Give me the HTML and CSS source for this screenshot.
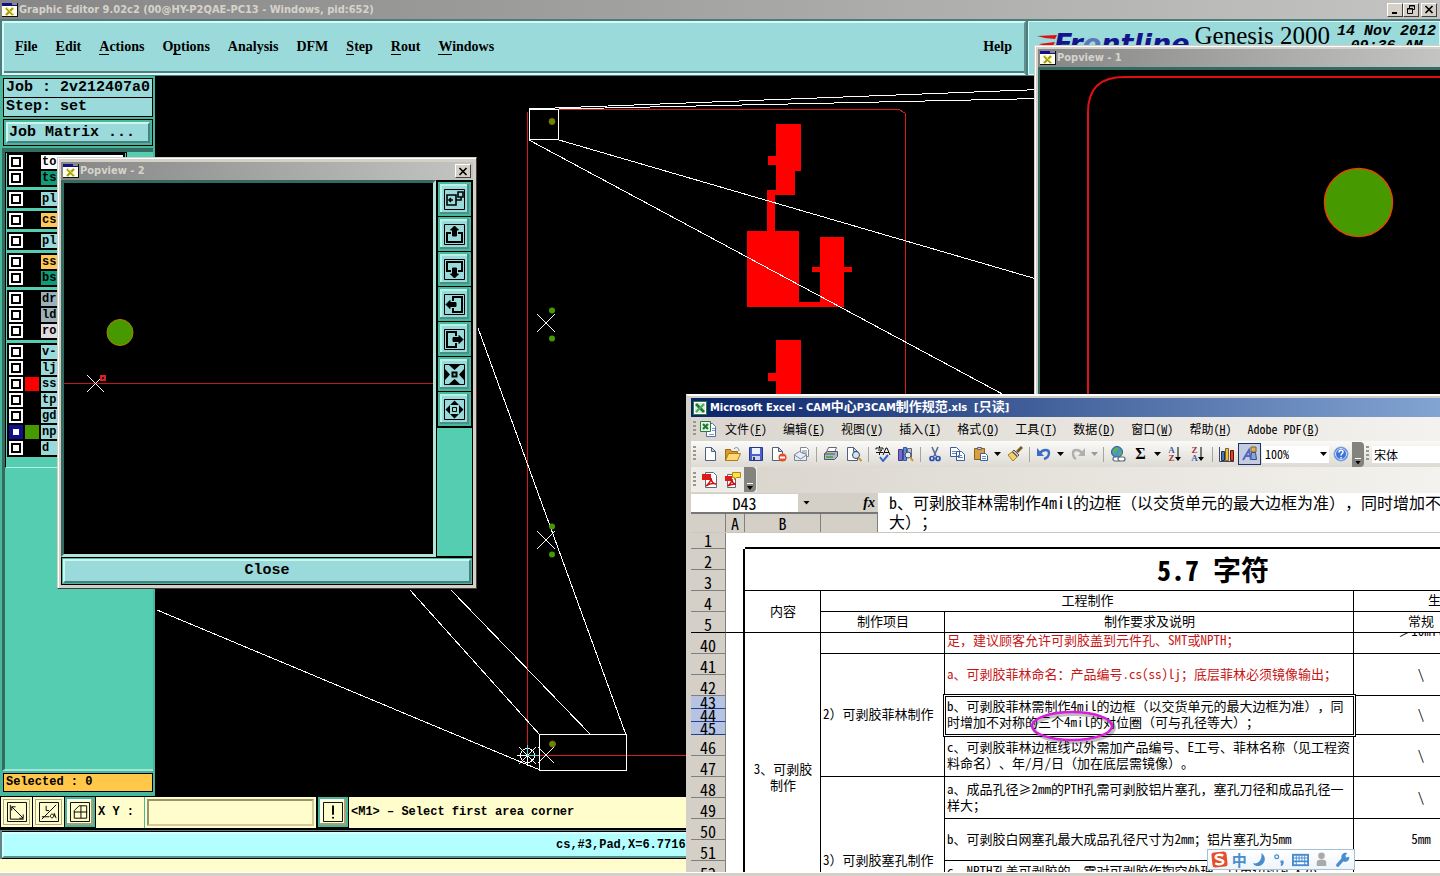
FILE: index.html
```html
<!DOCTYPE html>
<html lang="zh-CN">
<head>
<meta charset="utf-8">
<title>Graphic Editor</title>
<link rel="stylesheet" href="styles.css">
</head>
<body>
<svg class="defs" aria-hidden="true">
  <symbol id="xapp" viewBox="0 0 16 14"><path fill="#111" d="M0 0h16v14H0z"/><path fill="#fffff0" d="M0 0h15v13H0z"/><path fill="#10108a" d="M0 0h15v3H0z"/><path fill="#888" d="M10 0h5v2h-5z"/><path stroke="#a8a010" stroke-width="2.4" d="M4 5l7 7M11 5l-7 7"/><path stroke="#e8e040" d="M5 5l6 6"/></symbol>
  <symbol id="xls" viewBox="0 0 16 16"><path fill="#fff" stroke="#2c7a3c" d="M1.500 1.500h13v13h-13z"/><path fill="#d6ecd6" d="M3 3h10v10H3z"/><path stroke="#1d7a35" stroke-width="2.600" d="M4 4l8 8"/><path stroke="#4aa860" stroke-width="2.200" d="M12 4l-8 8"/></symbol>
  <symbol id="xlsdoc" viewBox="0 0 16 16"><path fill="#fff" stroke="#5070a8" d="M6.500 2.500h6l3 3v10h-9z"/><path stroke="#7a98cc" d="M12 7.500h3M12 9.500h3M9 13.500h5"/><path fill="#e6f4e6" stroke="#2c7a3c" d="M.5.500h10v10H.5z"/><path stroke="#1d7a35" stroke-width="2.200" d="M3 3l5 5M8 3L3 8"/></symbol>
  <symbol id="closex" viewBox="0 0 10 9"><path fill="none" stroke="#000" stroke-width="1.700" d="M1.500 1l7 7M8.500 1l-7 7"/></symbol>
  <symbol id="page" viewBox="0 0 16 16"><path fill="#fff" stroke="#50617e" d="M3.500 1.500h6l4 4v9h-10z"/><path fill="#c5d6f2" stroke="#50617e" d="M9.500 1.500v4h4z"/></symbol>
</svg>

<div class="app">
  <header class="titlebar">
    <svg class="appicon"><use href="#xapp"/></svg>
    <h1 class="caption">Graphic Editor 9.02c2 (00@HY-P2QAE-PC13 - Windows, pid:652)</h1>
    <div class="winbtns">
      <button class="winbtn" aria-label="Minimize"><svg viewBox="0 0 10 9"><path fill="#000" d="M2 7h5v2H2z"/></svg></button>
      <button class="winbtn" aria-label="Restore"><svg viewBox="0 0 10 9"><path fill="none" stroke="#000" d="M3.500 3V.5h5v4H7M1.500 3.500h5v5h-5zM1 4h6M3 1h6"/></svg></button>
      <button class="winbtn last" aria-label="Close"><svg><use href="#closex"/></svg></button>
    </div>
  </header>

  <div class="top">
    <nav class="menubar">
      <button class="menu"><u>F</u>ile</button><button class="menu"><u>E</u>dit</button><button class="menu"><u>A</u>ctions</button><button class="menu">O<u>p</u>tions</button><button class="menu">Analysis</button><button class="menu">DFM</button><button class="menu"><u>S</u>tep</button><button class="menu"><u>R</u>out</button><button class="menu"><u>W</u>indows</button><button class="menu help">Help</button>
    </nav>
    <div class="brand">
      <svg class="streaks" viewBox="0 0 20 24"><path fill="#e01010" d="M0 2l20-1-2 4-10-1zM2 10l16-2-2 4H8zM0 18l16-2-2 4z"/></svg>
      <span class="logo">Fr<span class="swoosh">o</span>ntline</span>
      <span class="product">Genesis 2000</span>
      <span class="date">14 Nov 2012<br>09:36 AM</span>
    </div>
  </div>

  <div class="work">
    <aside class="side">
      <div class="field">Job : 2v212407a0</div>
      <div class="field second">Step: set</div>
      <div class="matrixbox"><button class="matrix">Job Matrix ...</button></div>
      <div class="panel">
        <div class="layers">
          <div class="group">
            <div class="layer"><i class="tick"></i><i class="swatch"></i><span class="lname white">to</span></div>
            <div class="layer"><i class="tick"></i><i class="swatch"></i><span class="lname green">ts</span></div>
          </div>
          <div class="group"><div class="layer"><i class="tick"></i><i class="swatch"></i><span class="lname">pl</span></div></div>
          <div class="group"><div class="layer"><i class="tick"></i><i class="swatch"></i><span class="lname amber">cs</span></div></div>
          <div class="group"><div class="layer"><i class="tick"></i><i class="swatch"></i><span class="lname">pl</span></div></div>
          <div class="group">
            <div class="layer"><i class="tick"></i><i class="swatch"></i><span class="lname amber">ss</span></div>
            <div class="layer"><i class="tick"></i><i class="swatch"></i><span class="lname green">bs</span></div>
          </div>
          <div class="group">
            <div class="layer"><i class="tick"></i><i class="swatch"></i><span class="lname gray">dr</span></div>
            <div class="layer"><i class="tick"></i><i class="swatch"></i><span class="lname gray">ld</span></div>
            <div class="layer"><i class="tick"></i><i class="swatch"></i><span class="lname pale">ro</span></div>
          </div>
          <div class="group">
            <div class="layer"><i class="tick"></i><i class="swatch"></i><span class="lname">v-</span></div>
            <div class="layer"><i class="tick"></i><i class="swatch"></i><span class="lname">lj</span></div>
            <div class="layer"><i class="tick"></i><i class="swatch red"></i><span class="lname">ss</span></div>
            <div class="layer"><i class="tick"></i><i class="swatch"></i><span class="lname">tp</span></div>
            <div class="layer"><i class="tick"></i><i class="swatch"></i><span class="lname">gd</span></div>
            <div class="layer"><i class="tick navy"></i><i class="swatch lime"></i><span class="lname">np</span></div>
            <div class="layer"><i class="tick"></i><i class="swatch"></i><span class="lname">d</span></div>
          </div>
        </div>
      </div>
      <div class="selected">Selected : 0</div>
    </aside>
    <main class="canvas">
      <svg class="drawing" width="1285" height="720" viewBox="155 76 1285 720" fill="none" shape-rendering="crispEdges">
        <path stroke="#d81c1c" d="M527.500 755V112M559 109.500h340l6.500 4v290M527 755.500h200"/>
        <path fill="#f00" d="M776 124h25v47h-6v24h-20v36h24v71h21v-30h-8v-5h8v-30h24v30h8v5h-8v35h-97v-76h20v-41h9v-25h-8v-9h8zM776 340h25v60h-25v-19h-8v-8h8z"/>
        <g stroke="#fff">
          <path d="M529.500 109.500h29v30h-29zM539.500 734.500h87v36h-87zM529 109l511-19.500M559 109l481-10.500M529 140l477 256M559 140l481 140M478 328l148 407M410 590l130 145M451 590l140 145M157 610l383 160"/>
          <path d="M537 314l18 18M555 314l-18 18M537 531l18 18M555 531l-18 18M538 747l16 16M554 747l-16 16"/>
          <path d="M517 755.500h21M527.500 746v20M519 747l17 17M536 747l-17 17"/><circle cx="527.500" cy="755.500" r="7"/>
        </g>
        <path stroke="#50d8d8" d="M527.500 745v10h11"/>
        <g fill="#479900" shape-rendering="auto"><g stroke="#a05a00"><circle cx="552" cy="121.500" r="3"/><circle cx="552.500" cy="744" r="3"/></g><circle cx="552" cy="310.500" r="3"/><circle cx="552" cy="338.500" r="3"/><circle cx="552" cy="526.500" r="3"/><circle cx="552" cy="554.500" r="3"/></g>
      </svg>
    </main>
  </div>

  <div class="msgbar">
    <button class="tool flat" aria-label="Snap off"><svg viewBox="0 0 21 21"><path d="M.5.5h20v20H.5zM3.500 3v15h14M5 5l12 12M5 9V5h4M13 17h4v-4"/></svg></button>
    <button class="tool flat" aria-label="Angle"><svg viewBox="0 0 21 21"><path d="M.5.5h20v20H.5zM3 18L18 3M7.500 4v5h3M3 15.500h8M12 15c0-3 3-3 4 0M12 15c1 3 4 2 4-3M16 12l2 5"/></svg></button>
    <button class="tool" aria-label="Grid"><svg viewBox="0 0 21 21"><path d="M.5.500h20v20H.5zM4.500 9l5-5h8v13h-13zM11.500 4v13M4 10.500h14"/></svg></button>
    <label class="xy" for="xy">X Y :</label>
    <span class="xybox"><input id="xy" class="xyinput" type="text"></span>
    <button class="tool" aria-label="Alert"><svg viewBox="0 0 21 21"><path d="M.5.5h20v20H.5z"/><path fill="#000" d="M10 4h1v9h-1zM10 16h1v1h-1z"/></svg></button>
    <div class="message">&lt;M1&gt; – Select first area corner</div>
  </div>
  <div class="status"><div class="statustext">cs,#3,Pad,X=6.7716</div></div>
  <div class="cream"></div>
  <div class="edge"></div>
</div>

<section class="popview one">
  <header class="poptitle"><svg class="appicon"><use href="#xapp"/></svg><h2 class="caption">Popview - 1</h2></header>
  <div class="popbody">
    <svg width="400" height="330" viewBox="1040 70 400 330" fill="none"><path stroke="#e01010" stroke-width="2" d="M1088 400V112Q1088 77 1124 77h320"/><circle cx="1358.500" cy="202.500" r="34" fill="#479900" stroke="#e04a00" stroke-width="1.500"/></svg>
  </div>
</section>

<section class="popview two">
  <header class="poptitle"><svg class="appicon"><use href="#xapp"/></svg><h2 class="caption">Popview - 2</h2><button class="winbtn last" aria-label="Close window"><svg><use href="#closex"/></svg></button></header>
  <div class="poprow">
    <div class="popbody">
      <svg width="371" height="371" viewBox="64 183 371 371" fill="none"><path stroke="#c01818" d="M64 383.500h371"/><circle cx="120" cy="332.500" r="13" fill="#479900" stroke="#b08000"/><path stroke="#fff" d="M87 375l17 17M104 375l-17 17"/><path stroke="#e02020" stroke-width="2" d="M101 376h4v4h-4z"/></svg>
    </div>
    <div class="poptools">
      <button class="ptool" aria-label="Home"><svg viewBox="0 0 21 21"><path d="M.5.5h20v20H.5z"/><path stroke-width="1.600" d="M3 6h9v10H3zM14 3h5v5h-5zM12 11h5V8M9 11H5M7 9l-2 2 2 2"/></svg></button>
      <button class="ptool" aria-label="Pan up"><svg viewBox="0 0 21 21"><path d="M.5.5h20v20H.5z"/><path stroke-width="2" d="M7 9H3v9h15V9h-4"/><path fill="#000" d="M10.500 2l4 4h-2v6h-4V6h-2z"/></svg></button>
      <button class="ptool" aria-label="Pan down"><svg viewBox="0 0 21 21"><path d="M.5.5h20v20H.5z"/><path stroke-width="2" d="M7 12H3V3h15v9h-4"/><path fill="#000" d="M10.500 19l4-4h-2V9h-4v6h-2z"/></svg></button>
      <button class="ptool" aria-label="Pan left"><svg viewBox="0 0 21 21"><path d="M.5.5h20v20H.5z"/><path stroke-width="2" d="M9 7V3h9v15H9v-4"/><path fill="#000" d="M2 10.500l4-4v2h6v4H6v2z"/></svg></button>
      <button class="ptool" aria-label="Pan right"><svg viewBox="0 0 21 21"><path d="M.5.5h20v20H.5z"/><path stroke-width="2" d="M12 7V3H3v15h9v-4"/><path fill="#000" d="M19 10.500l-4-4v2H9v4h6v2z"/></svg></button>
      <button class="ptool" aria-label="Zoom in"><svg viewBox="0 0 21 21"><path d="M.5.5h20v20H.5z"/><path stroke-width="2" d="M8.500 8.500h4v4h-4z"/><path fill="#000" stroke="none" d="M5 1h11l-5.500 5zM5 20h11l-5.500-5zM1 5v11l5-5.500zM20 5v11l-5-5.500z"/></svg></button>
      <button class="ptool" aria-label="Zoom out"><svg viewBox="0 0 21 21"><path d="M.5.5h20v20H.5zM8.500 8.500h4v4h-4z"/><path fill="#000" stroke="none" d="M6 6h9l-4.500-4.500zM6 15h9l-4.500 4.500zM6 6v9l-4.500-4.500zM15 6v9l4.500-4.500z"/><path fill="#9adadb" stroke="none" d="M7 7h7v7H7z"/><path d="M8.500 8.500h4v4h-4z"/></svg></button>
    </div>
  </div>
  <div class="closebox"><button class="closebtn">Close</button></div>
</section>

<section class="excel">
  <header class="xtitle"><svg class="xicon"><use href="#xls"/></svg><h2 class="xcaption">Microsoft Excel - CAM<span>中心</span>P3CAM<span>制作规范</span>.xls&nbsp; [<span>只读</span>]</h2></header>
  <nav class="xmenu">
    <i class="grip"></i><svg class="xicon"><use href="#xlsdoc"/></svg>
    <button>文件(<u>F</u>)</button><button>编辑(<u>E</u>)</button><button>视图(<u>V</u>)</button><button>插入(<u>I</u>)</button><button>格式(<u>O</u>)</button><button>工具(<u>T</u>)</button><button>数据(<u>D</u>)</button><button>窗口(<u>W</u>)</button><button>帮助(<u>H</u>)</button><button>Adobe PDF(<u>B</u>)</button>
  </nav>
  <div class="xbar">
    <i class="grip"></i>
    <button class="ic" aria-label="New"><svg><use href="#page"/></svg></button>
    <button class="ic" aria-label="Open"><svg viewBox="0 0 16 16"><path fill="#d99a2b" stroke="#a06a10" d="M.5 14.500v-11h5l1 2h6v9z"/><path fill="#ffd978" stroke="#b07a18" d="M.5 14.500l3-7h12l-3 7z"/><path fill="none" stroke="#6a8ac0" d="M9 3c2-3 5-1 5 2"/></svg></button>
    <button class="ic" aria-label="Save"><svg viewBox="0 0 16 16"><path fill="#4a5fc8" stroke="#26348c" d="M1.500 1.500h13v13h-13z"/><path fill="#eef2ff" d="M4 2h8v6H4z"/><path fill="#d0d4e0" d="M4 10h8v4H4z"/><path fill="#26348c" d="M5 11h2v3H5z"/></svg></button>
    <button class="ic" aria-label="Permission"><svg viewBox="0 0 16 16"><use href="#page" x="-2" width="16" height="16"/><circle cx="11.500" cy="11.500" r="4" fill="#e0502a"/><path fill="#fff" d="M9 10.500h5v2H9z"/></svg></button>
    <button class="ic" aria-label="Mail"><svg viewBox="0 0 16 16"><path fill="#fff" stroke="#7a8699" d="M6.500 1.500h6l2 2v7h-8z"/><path fill="#e8edf5" stroke="#7a8699" d="M.5 8.500l5-3 7 3v6H.5z"/><path fill="none" stroke="#7a8699" d="M.5 9l6 4 6-4M8 5h5M8 7h5"/></svg></button>
    <i class="sep"></i>
    <button class="ic" aria-label="Print"><svg viewBox="0 0 16 16"><path fill="#fff" stroke="#667" d="M5.500 1.500h8l-2 5h-8z"/><path fill="#aeb8c4" stroke="#556" d="M1.500 7.500l3-2h10v5l-3 3h-10z"/><path fill="#4fae4f" d="M3 10h7v2H3z"/><path stroke="#556" d="M2 8h10"/></svg></button>
    <button class="ic" aria-label="Print preview"><svg viewBox="0 0 16 16"><use href="#page" x="-2" width="16" height="16"/><circle cx="10" cy="9" r="3.500" fill="#cfe6f8" stroke="#445"/><path stroke="#d09030" stroke-width="2" d="M12.500 12l3 3"/></svg></button>
    <i class="sep"></i>
    <button class="ic" aria-label="Spelling"><svg viewBox="0 0 16 16"><path fill="none" stroke="#111" d="M1 3.500V2h7v1.500M4.500 0v2M3 4h4L4.500 6v3M1 6.500h7M8 9l3-7h1l3 7M9 6.500h5"/><path fill="none" stroke="#3c64c8" stroke-width="2" d="M5 11l3 4 5-6"/></svg></button>
    <button class="ic" aria-label="Research"><svg viewBox="0 0 16 16"><path fill="#7a6ac8" stroke="#43388c" d="M.5 3.500h4v11h-4z"/><path fill="#5d90d8" stroke="#2c5aa0" d="M5.500 1.500h3v13h-3z"/><path fill="#b8c4d8" stroke="#667" d="M9.500 2.500h4v9h-4z"/><circle cx="10" cy="9" r="3" fill="#d8ecfa" stroke="#445"/><path stroke="#d09030" stroke-width="2" d="M12 11l3 4"/></svg></button>
    <i class="sep"></i>
    <button class="ic" aria-label="Cut"><svg viewBox="0 0 16 16"><path stroke="#5a6c94" stroke-width="1.600" d="M5 1l4 9M11 1L7 10"/><g fill="none" stroke="#2a50b0" stroke-width="1.700"><circle cx="5" cy="12.500" r="2"/><circle cx="11" cy="12.500" r="2"/></g></svg></button>
    <button class="ic" aria-label="Copy"><svg viewBox="0 0 16 16"><path fill="#fff" stroke="#3c5c9c" d="M.5 1.500h6l3 3v6h-9zM6.500 5.500h5l3 3v6h-8z"/><path stroke="#6a8ac8" d="M2 5.500h4M2 7.500h4M8 9.500h4M8 11.500h5"/></svg></button>
    <button class="ic" aria-label="Paste"><svg viewBox="0 0 16 16"><path fill="#d8a040" stroke="#8c6018" d="M1.500 2.500h10v11h-10z"/><path fill="#c8ccd4" stroke="#667" d="M4.500 1.500h4v2h-4z"/><path fill="#fff" stroke="#3c5c9c" d="M7.500 7.500h5l2 2v5h-7z"/><path stroke="#6a8ac8" d="M9 10.500h4M9 12.500h4"/></svg></button>
    <i class="arr"></i>
    <button class="ic" aria-label="Format painter"><svg viewBox="0 0 16 16"><path stroke="#7a5a28" stroke-width="3" d="M15 1l-5 5"/><path fill="#c0c4cc" stroke="#555" d="M7 4l5 5-1.500 1.500-5-5z"/><path fill="#f0d070" stroke="#a88020" d="M5 6l5 5-4 4-5-6z"/></svg></button>
    <i class="sep"></i>
    <button class="ic" aria-label="Undo"><svg viewBox="0 0 16 16"><path fill="none" stroke="#3a6cc8" stroke-width="2.400" d="M4 7c3-4 9-4 9 0 0 3-2 5-5 6"/><path fill="#3a6cc8" d="M1 2v8h7z"/></svg></button>
    <i class="arr"></i>
    <button class="ic" aria-label="Redo"><svg viewBox="0 0 16 16"><path fill="none" stroke="#b0b0ac" stroke-width="2.400" d="M12 7c-3-4-9-4-9 0 0 3 1 5 3 6"/><path fill="#b0b0ac" d="M15 2v8H8z"/></svg></button>
    <i class="arr dim"></i><i class="sep"></i>
    <button class="ic" aria-label="Hyperlink"><svg viewBox="0 0 16 16"><circle cx="7" cy="6" r="5.500" fill="#4a90d0" stroke="#2a5a8c"/><path fill="#58b058" d="M3 4c2-3 4-3 6-2L7 5 5 8 3 7zM9 6l3-1v3l-3 2z"/><g fill="#fff" stroke="#567" stroke-width="1.200"><rect x="3" y="11" width="7" height="4" rx="2"/><rect x="8" y="11" width="7" height="4" rx="2"/></g></svg></button>
    <button class="ic sum" aria-label="Sum">Σ</button>
    <i class="arr"></i>
    <button class="ic sort" aria-label="Sort ascending"><span class="az"><b class="bl">A</b><b class="rd">Z</b></span><svg viewBox="0 0 6 16"><path fill="none" stroke="#000" d="M3 1v13"/><path d="M0 11h6l-3 4z"/></svg></button>
    <button class="ic sort" aria-label="Sort descending"><span class="az"><b class="rd">Z</b><b class="bl">A</b></span><svg viewBox="0 0 6 16"><path fill="none" stroke="#000" d="M3 1v13"/><path d="M0 11h6l-3 4z"/></svg></button>
    <i class="sep"></i>
    <button class="ic" aria-label="Chart"><svg viewBox="0 0 16 16"><path fill="none" stroke="#446" d="M.5 1v14.500H15"/><path fill="#4a70c8" stroke="#234" d="M2.500 5.500h3v9h-3z"/><path fill="#f0c030" stroke="#763" d="M6.500 2.500h3v12h-3z"/><path fill="#d84820" stroke="#611" d="M11.500 4.500h3v10h-3z"/></svg></button>
    <button class="ic on" aria-label="Drawing"><svg viewBox="0 0 16 16"><path fill="#d8b060" stroke="#86621c" d="M9 1h5v5H9z"/><path fill="#8fa4d0" stroke="#3a4c80" d="M9.500 6.500h4l1 7h-6z"/><path fill="none" stroke="#5468c0" stroke-width="2" d="M1 14L7 4l2 10M3 10h5"/></svg></button>
    <label class="combo"><input type="text" value="100%" aria-label="Zoom"><i class="arr"></i></label>
    <button class="ic" aria-label="Help"><svg viewBox="0 0 16 16"><circle cx="8" cy="8" r="7" fill="#3a74d8" stroke="#88a8e0"/><circle cx="8" cy="8" r="5.500" fill="none" stroke="#dce8fc"/><path fill="none" stroke="#fff" stroke-width="1.500" d="M6 6.500c0-3 4-3 4-.5C10 7.500 8 7.500 8 9.500M8 11v1.500"/></svg></button>
    <i class="cap"></i>
    <i class="grip"></i>
    <input class="fontname" type="text" value="宋体" aria-label="Font">
  </div>
  <div class="xbar2">
    <div class="pdfbar"><i class="grip"></i>
    <button class="ic" aria-label="Convert to PDF"><svg viewBox="0 0 16 16"><path fill="#fff" stroke="#667" d="M3.500.5h8l3 3v12h-11z"/><path fill="#e01818" d="M0 2h9v6H0z"/><path fill="none" stroke="#d01010" stroke-width="1.500" d="M4 14c4-3 5-6 5-8 0 4 3 6 5 6-3-1-7 0-10 2"/></svg></button>
    <button class="ic" aria-label="Convert and mail"><svg viewBox="0 0 16 16"><path fill="#fff" stroke="#667" d="M2.500 2.500h8v13h-8z"/><path fill="#e01818" d="M0 4h7v5H0z"/><path fill="none" stroke="#d01010" stroke-width="1.500" d="M3 14c3-3 4-5 4-7 0 4 2 5 4 5-3 0-5 0-8 2"/><path fill="#ffe040" stroke="#b08a10" d="M7.500.5h8v5h-4l-2 2v-2h-2z"/></svg></button>
    <i class="cap"></i></div>
  </div>
  <div class="fbar">
    <div class="fleft">
      <div class="nameline"><input class="namebox" type="text" value="D43" aria-label="Name box"><i class="arr"></i><span class="fx">fx</span></div>
      <div class="colheads"><span class="ch corner"></span><span class="ch a">A</span><span class="ch b">B</span><span class="ch c"></span></div>
    </div>
    <div class="formula">b、可剥胶菲林需制作4mil的边框（以交货单元的最大边框为准），同时增加不<br>大）；</div>
  </div>
  <div class="sheet">
    <table class="grid">
      <colgroup><col class="w0"><col class="w1"><col class="w2"><col class="w3"><col class="w4"><col class="w5"><col class="w6"></colgroup>
      <tbody>
      <tr class="r16"><th>1</th><td class="n"></td><td class="n thickb" colspan="5"></td></tr>
      <tr><th>2</th><td class="n thickr"></td><td class="heading" rowspan="2" colspan="5">5.7 字符</td></tr>
      <tr><th>3</th><td class="n thickr"></td></tr>
      <tr><th>4</th><td class="n thickr"></td><td rowspan="2" class="mid frz">内容</td><td colspan="2" class="mid">工程制作</td><td colspan="2" class="prod">生</td></tr>
      <tr><th class="frz">5</th><td class="n thickr frz"></td><td class="mid frz">制作项目</td><td class="mid frz">制作要求及说明</td><td class="mid frz">常规</td><td class="frz"></td></tr>
      <tr><th>40</th><td class="n thickr"></td><td rowspan="15" class="mid">3、可剥胶<br>制作</td><td></td><td class="red up">足，建议顾客允许可剥胶盖到元件孔、SMT或NPTH；</td><td class="mid up"><div class="peek"><div class="peektext">＞10mil</div></div></td><td></td></tr>
      <tr><th>41</th><td class="n thickr"></td><td rowspan="7" class="item">2）可剥胶菲林制作</td><td rowspan="2" class="red">a、可剥胶菲林命名：产品编号.cs(ss)lj；底层菲林必须镜像输出；</td><td rowspan="2" class="mid">\</td><td></td></tr>
      <tr><th>42</th><td class="n thickr"></td><td></td></tr>
      <tr class="r13"><th class="sel">43</th><td class="n thickr"></td><td rowspan="3" class="active">b、可剥胶菲林需制作4mil的边框（以交货单元的最大边框为准），同<br>时增加不对称的三个4mil的对位圈（可与孔径等大）；</td><td rowspan="3" class="mid">\</td><td></td></tr>
      <tr class="r13"><th class="sel">44</th><td class="n thickr"></td><td></td></tr>
      <tr class="r13"><th class="sel">45</th><td class="n thickr"></td><td></td></tr>
      <tr><th>46</th><td class="n thickr"></td><td rowspan="2">c、可剥胶菲林边框线以外需加产品编号、E工号、菲林名称（见工程资<br>料命名）、年/月/日（加在底层需镜像）。</td><td rowspan="2" class="mid">\</td><td></td></tr>
      <tr><th>47</th><td class="n thickr"></td><td></td></tr>
      <tr><th>48</th><td class="n thickr"></td><td rowspan="8" class="item">3）可剥胶塞孔制作</td><td rowspan="2">a、成品孔径≥2mm的PTH孔需可剥胶铝片塞孔，塞孔刀径和成品孔径一<br>样大；</td><td rowspan="2" class="mid">\</td><td></td></tr>
      <tr><th>49</th><td class="n thickr"></td><td></td></tr>
      <tr><th>50</th><td class="n thickr"></td><td rowspan="2">b、可剥胶白网塞孔最大成品孔径尺寸为2mm；铝片塞孔为5mm</td><td rowspan="2" class="mid">5mm</td><td></td></tr>
      <tr><th>51</th><td class="n thickr"></td><td></td></tr>
      <tr><th>52</th><td class="n thickr"></td><td rowspan="4" class="low">c、NPTH孔盖可剥胶的，需对可剥胶作掏空处理，且单边掏孔大小</td><td rowspan="4"></td><td></td></tr>
      <tr><th></th><td class="n thickr"></td><td></td></tr>
      <tr><th></th><td class="n thickr"></td><td></td></tr>
      <tr><th></th><td class="n thickr"></td><td></td><td></td></tr>
      </tbody>
    </table>
    <svg class="ring" viewBox="0 0 90 40"><ellipse cx="46" cy="22" rx="40" ry="14" fill="none" stroke="#000" stroke-opacity=".25" stroke-width="4"/><ellipse cx="44" cy="20" rx="40" ry="14" fill="none" stroke="#d81ed8" stroke-width="2.500"/></svg>
  </div>
</section>

<div class="ime">
  <svg viewBox="0 0 18 18"><rect x="1" y="1" width="16" height="16" rx="3" fill="#e5502a" transform="rotate(-6 9 9)"/><path fill="none" stroke="#fff" stroke-width="2.600" d="M13 5C9 3 5 4 5 6.500S13 9 13 11.500 8 15 4.500 13"/></svg>
  <span class="zh">中</span>
  <svg viewBox="0 0 18 18"><path fill="#4a8cd0" d="M11 2c7 5 3 14-4 14-2 0-4-1-5-3 6 1 10-4 9-11z"/></svg>
  <svg viewBox="0 0 18 18"><circle cx="5" cy="6" r="2" fill="none" stroke="#4a8cd0" stroke-width="1.300"/><path fill="#4a8cd0" d="M9 10h3c1 3 0 5-2 6l-1-1 1-2H9z"/></svg>
  <svg viewBox="0 0 18 18"><path fill="#4a8cd0" d="M0 3h18v13H0z"/><path stroke="#fff" stroke-width="2" stroke-dasharray="2 1" d="M2 6h14M2 9h14"/><path stroke="#fff" stroke-width="2" d="M2 13h2M5 13h8M14 13h2"/></svg>
  <svg viewBox="0 0 18 18"><circle cx="9" cy="5" r="3.500" fill="#aaa"/><path fill="#aaa" d="M4 16V12q0-3 5-3t5 3v4z"/></svg>
  <svg viewBox="0 0 18 18"><path fill="none" stroke="#4a8cd0" stroke-width="3.500" stroke-linecap="round" d="M4 15l6-7"/><path fill="#4a8cd0" d="M8 8c-1-4 2-7 6-6l-2 3 1 2 3-1c1 4-3 6-6 5z"/></svg>
</div>
</body>
</html>
```
FILE: styles.css
```css
* { box-sizing: border-box; }
html, body { height: 100%; }
body { margin: 0; overflow: hidden; background: #000; color: #000; font-family: "Liberation Sans", "Noto Sans CJK SC", sans-serif; text-spacing-trim: space-all; position: relative; }
button { margin: 0; padding: 0; border: 0; background: none; font: inherit; color: inherit; }
input { margin: 0; border: 0; padding: 0; font: inherit; min-width: 0; border-radius: 0; outline: 0; }
svg { display: block; flex: none; }
h1, h2 { margin: 0; }
.defs { position: absolute; width: 0; height: 0; }

/* main editor */
.app { height: 100vh; display: flex; flex-direction: column; }
.titlebar { flex: 0 0 19px; display: flex; align-items: center; padding: 0 3px 0 2px; background: linear-gradient(90deg, #868686, #c4c4c2); }
.appicon { width: 16px; height: 14px; }
.caption { flex: 1; padding-left: 1px; font: bold 11px/16px "DejaVu Sans Condensed", "DejaVu Sans", sans-serif; color: #d6d3cb; white-space: nowrap; }
.winbtns { display: flex; }
.winbtn { width: 16px; height: 14px; padding: 1px 2px; background: #d4d0c8; border: 1px solid; border-color: #fff #404040 #404040 #fff; }
.winbtn svg { width: 10px; height: 9px; }
.winbtns .last { margin-left: 2px; }

.top { flex: 0 0 57px; display: flex; background: #4f7c7c; padding: 2px 0 1px 2px; gap: 2px; }
.menubar { flex: 1; min-width: 0; display: flex; align-items: center; gap: 18px; padding: 0 12px 3px 11px; background: #9adadb; border: 2px solid #d4fbf8; border-right-color: #5f8f90; border-bottom: 2px solid #d4fbf8; box-shadow: inset 0 -2px 0 #527e7e; font: bold 14px/17px "Liberation Serif", serif; }
.menu u { text-decoration: none; border-bottom: 1px solid #000; }
.help { margin-left: auto; }
.brand { flex: 0 0 412px; background: #9adadb; border: 1px solid #d4fbf8; display: flex; align-items: flex-start; padding: 0 3px 0 8px; white-space: nowrap; overflow: hidden; }
.streaks { width: 20px; height: 24px; margin-top: 12px; margin-right: -3px; }
.logo { flex: 0 0 135px; font: italic bold 27px/30px "DejaVu Sans", sans-serif; color: #14148c; padding-top: 7px; }
.swoosh { color: #5d78b8; }
.product { margin-left: auto; font: 25px/28px "Liberation Serif", serif; }
.date { margin-left: 7px; padding-top: 2px; font: italic bold 15px/15px "Liberation Mono", monospace; text-align: center; }

.work { flex: 1; min-height: 0; display: flex; background: #000; }
.side { flex: 0 0 155px; display: flex; flex-direction: column; padding: 2px 2px 4px 3px; background: #49b79c; min-height: 0; }
.field { flex: none; height: 20px; border: 1px solid #000; background: #9adadb; padding-left: 2px; font: bold 15px/18px "Liberation Mono", monospace; white-space: pre; }
.second { border-top: 0; height: 19px; }
.matrixbox { flex: none; margin: 2px 0; padding: 2px; height: 27px; border: 1px solid #000; }
.matrix { width: 100%; height: 21px; text-align: left; padding-left: 1px; background: #9adadb; border: 2px solid; border-color: #cdf6f2 #4a8080 #4a8080 #cdf6f2; font: bold 15px/17px "Liberation Mono", monospace; }
.panel { flex: 1; min-height: 0; margin: 0 0 2px -1px; border-left: 3px solid #336b60; border-top: 4px solid #336b60; border-bottom: 2px solid #9fe6d6; background: #55cdb0; }
.layers { width: 122px; height: 316px; border: 1px solid #000; padding: 0 1px; border-bottom-color: #b6f2e6; }
.group { background: #000; padding: 1px 2px; margin-bottom: 3px; }
.layer { display: flex; height: 16px; align-items: center; gap: 2px; }
.tick { width: 14px; height: 14px; border: 2px solid #fff; background: #fff; box-shadow: inset 0 0 0 2px #000; }
.navy { border-color: #10108a; box-shadow: inset 0 0 0 2px #10108a; }
.swatch { width: 14px; height: 14px; }
.red.swatch { background: #f00; }
.lime { background: #479900; }
.lname { flex: 1; height: 14px; padding-left: 1px; background: #9adadb; font: bold 12px/14px "Liberation Mono", monospace; }
.white { background: #fff; } .green { background: #0f9c78; } .amber { background: #ffc858; } .gray { background: #9bb0b8; } .pale { background: #e0dce0; }
.selected { flex: none; height: 19px; border: 1px solid #000; background: #ffc84b; padding-left: 2px; font: bold 12px/17px "Liberation Mono", monospace; }
.canvas { flex: 1; min-width: 0; overflow: hidden; }

.msgbar { flex: 0 0 34px; display: flex; background: #000; padding: 1px 0 2px 1px; font: bold 12px/31px "Liberation Mono", monospace; }
.tool { width: 30px; height: 30px; padding: 3px; background: #fffdcc; border: 2px solid #49b79c; box-shadow: inset -2px -2px 0 #a8a078, inset 2px 2px 0 #fffff0; margin-right: 1px; }
.tool.flat { width: 31px; border-color: #fffdcc; box-shadow: inset 0 0 0 1px #b0a880; }
.tool svg { width: 20px; height: 20px; margin: auto; fill: none; stroke: #000; }
.xy { width: 48px; background: #fffdcc; padding-left: 2px; }
.xybox { flex: 0 0 172px; padding: 2px; background: #fffdcc; border-left: 1px solid #49b79c; margin-right: 2px; }
.xyinput { display: block; width: 100%; height: 27px; background: #fffdcc; border: 2px solid; border-color: #9a9468 #d2cc9c #d2cc9c #9a9468; }
.message { flex: 1; background: #fffdcc; padding-left: 2px; white-space: nowrap; }
.status { flex: 0 0 29px; background: #000; border-top: 1px solid #5a8888; border-left: 2px solid #5a8888; padding: 1px 0; }
.statustext { height: 26px; background: #b3ffff; border: 2px solid #d8ffff; border-bottom: 2px solid #5a9090; padding-left: 552px; font: bold 12px/22px "Liberation Mono", monospace; }
.cream { flex: 0 0 13px; background: #fffdcc; }
.edge { flex: 0 0 4px; background: #d4d0c8; border-top: 1px solid #fff; }

/* pop-up windows */
.popview { position: absolute; background: #d4d0c8; border: 1px solid; border-color: #d4d0c8 #404040 #404040 #d4d0c8; box-shadow: inset 1px 1px 0 #fff; padding: 3px; display: flex; flex-direction: column; }
.one { left: 1034px; right: 0; top: 45px; bottom: 478px; border-right: 0; padding-right: 0; }
.two { left: 57px; top: 157px; width: 420px; height: 432px; padding-top: 4px; }
.poptitle { flex: 0 0 18px; display: flex; align-items: center; padding: 0 2px; background: linear-gradient(90deg, #868686, #c4c4c2); }
.one .popbody { flex: 1; border-left: 2px solid #336b60; }
.popbody { background: #000; border-top: 3px solid #336b60; overflow: hidden; }
.poprow { flex: 1; display: flex; min-height: 0; background: #000; }
.two .popbody { flex: 1; border: 3px solid; border-color: #336b60 #b6e4d8 #b6e4d8 #336b60; }
.poptools { flex: 0 0 37px; padding: 1px; display: flex; flex-direction: column; gap: 1px; background: linear-gradient(#000, #000) 0 0 / 100% 247px no-repeat, #55cdb0; border: 1px solid #000; }
.ptool { width: 33px; height: 34px; border: 2px solid #49b79c; background: #9adadb; padding: 4px; box-shadow: inset -2px -2px 0 #4a9088, inset 2px 2px 0 #b6f2e6; }
.ptool svg { width: 21px; height: 21px; fill: none; stroke: #000; }
.closebox { flex: 0 0 28px; padding: 1px; background: #49b79c; border: 1px solid #000; }
.closebtn { display: block; width: 100%; height: 24px; background: #9adadb; border: 2px solid; border-color: #cdf6f2 #4a8080 #4a8080 #cdf6f2; font: bold 15px/20px "Liberation Mono", monospace; }

/* spreadsheet window */
.excel { position: absolute; left: 686px; right: 0; top: 394px; bottom: 4px; background: #d4d0c8; border: 2px solid #d4d0c8; border-top-color: #fff; border-right: 0; border-bottom: 0; padding: 2px 0 0 3px; display: flex; flex-direction: column; overflow: hidden; font: 12px/16px "Noto Sans Mono CJK SC", "Liberation Mono", "Noto Sans CJK SC", monospace; }
.xtitle { flex: 0 0 18px; display: flex; align-items: center; gap: 2px; padding-left: 1px; background: linear-gradient(90deg, #0a246a, #82a4d2); }
.xcaption { font: bold 11px/18px "DejaVu Sans Condensed", "Noto Sans CJK SC", sans-serif; color: #fff; white-space: nowrap; }
.xcaption span { font-size: 13px; }
.xicon { width: 16px; height: 16px; }
.xmenu { flex: 0 0 24px; display: flex; align-items: center; background: linear-gradient(90deg, #dad6cf, #f4f2ee); }
.xmenu button { margin-left: 16px; white-space: nowrap; }
.xmenu .xicon + button { margin-left: 9px; }
.xmenu .xicon { margin-left: 2px; }
.grip { flex: none; width: 3px; height: 16px; margin: 0 2px; background: repeating-linear-gradient(#9a978f 0 2px, transparent 2px 4px); }
.xbar { flex: 0 0 26px; display: flex; align-items: center; background: linear-gradient(#fafaf8, #dddad3); white-space: nowrap; }
.ic { flex: 0 0 23px; height: 22px; display: flex; align-items: center; justify-content: center; }
.ic svg { width: 16px; height: 16px; }
.on { background: #c4cce2; border: 1px solid #1c3468; }
.sep { flex: none; width: 1px; height: 15px; margin: 0 2px 0 3px; background: #a8a49c; }
.arr { flex: none; width: 7px; height: 4px; margin: 0 2px; background: #000; clip-path: polygon(0 0, 100% 0, 50% 100%); }
.dim { background: #999; }
.sum { font: bold 16px/20px "Liberation Serif", serif; }
.sort .az { display: flex; flex-direction: column; font: 9px/8px "Liberation Serif", serif; }
.sort svg { width: 6px; }
.bl { color: #3c5ca8; } .rd { color: #a83030; }
.combo { flex: 0 0 67px; height: 17px; margin-left: 1px; background: #fff; display: flex; align-items: center; padding-left: 3px; }
.combo input { flex: 1; width: 40px; background: #fff; }
.cap { flex: none; width: 12px; height: 25px; padding: 16px 3px 0; border-radius: 0 4px 4px 0; background: #85837e; }
.cap::before { content: ""; display: block; height: 1px; margin-bottom: 2px; background: #fff; }
.cap::after { content: ""; display: block; height: 4px; background: #000; clip-path: polygon(0 0, 100% 0, 50% 100%); }
.fontname { flex: 1; height: 17px; background: #fff; padding-left: 2px; margin-left: 1px; }
.xbar2 { flex: 0 0 26px; background: linear-gradient(90deg, #d8d4cc, #f4f2ee); }
.pdfbar { width: 66px; height: 25px; display: flex; align-items: center; background: #efede8; }
.fbar { flex: 0 0 39px; display: flex; border-bottom: 1px solid #c8c8bc; font-size: 16px; }
.fleft { flex: 0 0 187px; }
.nameline { height: 19px; display: flex; align-items: center; }
.namebox { width: 107px; height: 18px; background: #fff; text-align: center; font-size: 16px; line-height: 18px; }
.nameline .arr { margin-left: 5px; }
.fx { margin-left: auto; padding-right: 3px; font: italic bold 14px/16px "Liberation Serif", serif; }
.colheads { height: 20px; display: flex; border-top: 2px solid #777; }
.ch { border-right: 1px solid #808080; text-align: center; line-height: 18px; }
.corner { width: 35px; } .a { width: 19px; } .b { width: 76px; } .c { flex: 1; }
.formula { flex: 1; min-width: 0; background: #fff; padding-left: 11px; line-height: 19px; white-space: nowrap; overflow: hidden; }
.sheet { flex: 1; min-height: 0; position: relative; background: #fff; overflow: hidden; }
.grid { table-layout: fixed; width: 990px; border-collapse: separate; border-spacing: 0; font-size: 13px; line-height: 16px; }
.w0 { width: 35px; } .w1 { width: 19px; } .w2 { width: 76px; } .w3 { width: 124px; } .w4 { width: 409px; } .w5 { width: 134px; } .w6 { width: 193px; }
.grid tr { height: 21px; }
.grid .r16 { height: 16px; }
.grid .r13 { height: 13px; }
.grid th { padding: 0 0 1px; background: #d4d0c8; border-right: 1px solid #808080; border-bottom: 1px solid #808080; font-weight: normal; font-size: 16px; line-height: 14px; vertical-align: bottom; }
.grid .r13 th { padding: 0; line-height: 12px; background: #b6c3e2; border-bottom-color: #24408c; }
.grid td { padding: 0 1px 2px 2px; border-right: 1px solid #000; border-bottom: 1px solid #000; white-space: nowrap; }
.grid .n { padding: 0; border: 0; }
.grid .thickr { border-right: 2px solid #000; }
.grid .thickb { border-bottom: 2px solid #000; }
.grid .frz { border-bottom: 1px solid #000; }
.grid .mid, .grid .heading { text-align: center; }
.grid .heading { font-size: 28px; font-weight: bold; line-height: 36px; }
.grid .prod { padding-left: 74px; }
.grid .red { color: #c81414; }
.grid .up { vertical-align: top; line-height: 14px; }
.grid .low { vertical-align: top; padding-top: 2px; }
.grid .active { position: relative; box-shadow: inset 1px 1px 0 #000, 0 0 0 1px #fff, 0 0 0 2px #000; }
.peek { height: 8px; overflow: hidden; }
.peektext { margin-top: -9px; }
.ring { position: absolute; left: 337px; top: 173px; width: 90px; height: 40px; }

.ime { position: absolute; left: 1207px; top: 849px; width: 148px; height: 21px; padding: 0 3px; display: flex; align-items: center; justify-content: space-between; background: linear-gradient(#fff, #eef4fa); border: 1px solid #a4c0d4; }
.ime svg { width: 17px; height: 17px; }
.zh { font: bold 15px/18px "Noto Sans CJK SC", sans-serif; color: #4a8cd0; }
```
